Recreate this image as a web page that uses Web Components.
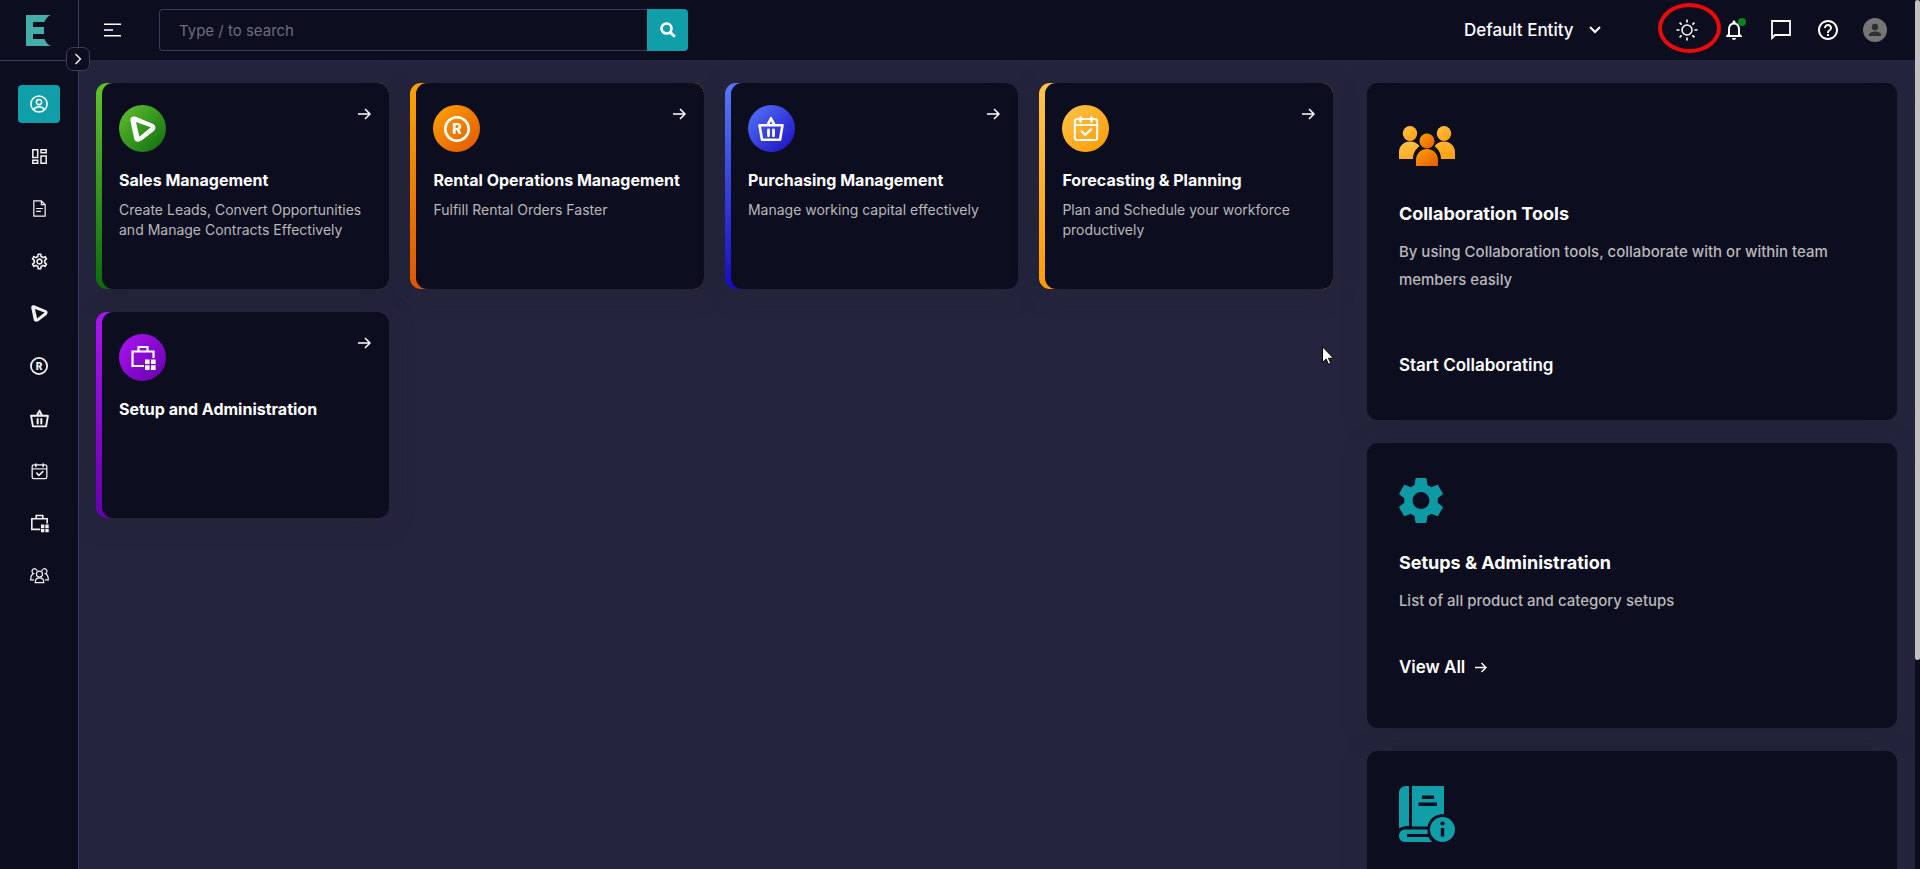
<!DOCTYPE html>
<html lang="en">
<head>
<meta charset="utf-8">
<title>Dashboard</title>
<style>
  html, body { margin: 0; height: 100%; background: #24243e; }
  body {
    --surface: #0d0d20;
    --canvas: #24243e;
    --line: #3c3b5a;
    --accent: #109fa9;
    --muted: #b9b9b9;
    --shadow: 0 4px 24px rgba(34, 36, 40, .35);
    font-family: Inter, sans-serif;
    color: #fff;
  }
</style>
</head>
<body>
<app-shell>
  <app-sidebar slot="sidebar"></app-sidebar>
  <app-header slot="header"></app-header>

  <module-card slot="modules" icon="sales" heading="Sales Management" style="--from:#62c22e;--to:#0b6b0f">Create Leads, Convert Opportunities and Manage Contracts Effectively</module-card>
  <module-card slot="modules" icon="registered" heading="Rental Operations Management" style="--from:#ffa400;--to:#e05500">Fulfill Rental Orders Faster</module-card>
  <module-card slot="modules" icon="basket" heading="Purchasing Management" style="--from:#5577fa;--to:#1a0bc0">Manage working capital effectively</module-card>
  <module-card slot="modules" icon="calendar" heading="Forecasting &amp; Planning" style="--from:#fcc449;--to:#ff9a06">Plan and Schedule your workforce productively</module-card>
  <module-card slot="modules" icon="briefcase" heading="Setup and Administration" style="--from:#ae14f5;--to:#6300ab"></module-card>

  <info-card slot="aside" icon="people" heading="Collaboration Tools" action="Start Collaborating" style="--icon-h:56px;--pad-top:35px;--action-gap:53px;--pad-bottom:37px">By using Collaboration tools, collaborate with or within team members easily</info-card>
  <info-card slot="aside" icon="gear" heading="Setups &amp; Administration" action="View All" arrow style="--icon-h:45px;--pad-top:35px;--action-gap:34px;--pad-bottom:43px">List of all product and category setups</info-card>
  <info-card slot="aside" icon="book" style="--icon-h:56px;--pad-top:35px;--pad-bottom:160px"></info-card>
</app-shell>

<script>
const S = 'fill="none" stroke="currentColor"';
const ICONS = {
  logo: ['0 0 25 31', '<path fill="#44ada8" d="M0 0h25c-3 1-5.500 4-6.500 7H7v5h11v7H7v5h11.500c1 3 3.500 6 6.500 7H0z"/>'],
  menu: ['0 0 17 14', `<path ${S} stroke-width="1.600" d="M0 1.200h17M0 7h9M0 12.800h17"/>`],
  chevronRight: ['0 0 8 12', `<path ${S} stroke-width="1.300" d="M1.500 1l5 5-5 5"/>`],
  chevronDown: ['0 0 12 8', `<path ${S} stroke-width="2" d="M1 1l5 5 5-5"/>`],
  search: ['0 0 16 16', `<circle cx="6.500" cy="6.500" r="5" ${S} stroke-width="2.600"/><path ${S} stroke-width="2.800" d="M10.200 10.200l4.600 4.600"/>`],
  arrow: ['0 0 13 12', `<path ${S} stroke-width="1.500" d="M0 6h12M7 1l5 5-5 5"/>`],
  sun: ['0 0 22 22', `<circle cx="11" cy="11" r="5" ${S} stroke-width="1.500"/><path ${S} stroke-width="1.600" d="M11 .5v3M11 18.500v3M.5 11h3M18.500 11h3M3.600 3.600l2 2M16.400 16.400l2 2M3.600 18.400l2-2M16.400 5.600l2-2"/>`],
  bell: ['4 2 16 20', '<path fill="currentColor" d="M12 22c1.100 0 2-.9 2-2h-4c0 1.100.9 2 2 2zm6-6v-5c0-3.070-1.630-5.640-4.500-6.320V4c0-.83-.67-1.500-1.500-1.500s-1.500.67-1.500 1.500v.68C7.640 5.360 6 7.920 6 11v5l-2 2v1h16v-1l-2-2zm-2 1H8v-6c0-2.480 1.510-4.500 4-4.500s4 2.020 4 4.500v6z"/>'],
  chat: ['0 0 20 20', `<path ${S} stroke-width="1.800" d="M1 18V1h18v14H4z"/>`],
  help: ['2 2 20 20', '<path fill="currentColor" d="M11 18h2v-2h-2v2zm1-16C6.480 2 2 6.480 2 12s4.480 10 10 10 10-4.480 10-10S17.520 2 12 2zm0 18c-4.410 0-8-3.590-8-8s3.590-8 8-8 8 3.590 8 8-3.590 8-8 8zm0-14c-2.210 0-4 1.790-4 4h2c0-1.100.9-2 2-2s2 .9 2 2c0 2-3 1.750-3 5h2c0-2.250 3-2.500 3-5 0-2.210-1.790-4-4-4z"/>'],
  avatar: ['0 0 24 24', '<circle cx="12" cy="12" r="12" fill="#757575"/><circle cx="12" cy="9" r="3.200" fill="#303030"/><path fill="#303030" d="M6 18v-1.200c0-2 4-3.200 6-3.200s6 1.200 6 3.200V18z"/>'],
  user: ['0 0 20 20', `<circle cx="10" cy="10" r="9" ${S} stroke-width="1.700"/><circle cx="10" cy="7.800" r="2.900" ${S} stroke-width="1.700"/><path ${S} stroke-width="1.700" d="M3.800 16.200c1.700-2.200 3.800-3.200 6.200-3.200s4.500 1 6.200 3.200"/>`],
  dashboard: ['0 0 15 15', `<path ${S} stroke-width="1.500" d="M.8.8h4.900v7.700H.8zM.8 11.200h4.900v3H.8zM9 .8h5.200v3H9zM9 7h5.200v7.200H9z"/>`],
  document: ['0 0 14 18', `<path ${S} stroke-width="1.300" d="M1 1h8l4 4v12H1zM9 1v4h4M3.500 9h7M3.500 12h5"/>`],
  settings: ['1.500 1.500 21 21', '<path fill="currentColor" d="M19.430 12.980c.04-.32.07-.64.07-.98 0-.34-.03-.66-.07-.98l2.110-1.650c.19-.15.24-.42.12-.64l-2-3.460c-.09-.16-.26-.25-.44-.25-.06 0-.12.010-.17.030l-2.490 1c-.52-.4-1.080-.73-1.690-.98l-.38-2.650C14.460 2.180 14.250 2 14 2h-4c-.25 0-.46.18-.49.42l-.38 2.650c-.61.25-1.170.59-1.690.98l-2.490-1c-.06-.02-.12-.03-.18-.03-.17 0-.34.09-.43.25l-2 3.460c-.13.22-.07.49.12.64l2.110 1.650c-.04.32-.07.65-.07.98 0 .33.03.66.07.98l-2.110 1.650c-.19.15-.24.42-.12.64l2 3.460c.09.16.26.25.44.25.06 0 .12-.01.17-.03l2.490-1c.52.4 1.080.73 1.690.98l.38 2.650c.03.24.24.42.49.42h4c.25 0 .46-.18.49-.42l.38-2.650c.61-.25 1.170-.59 1.690-.98l2.490 1c.06.02.12.03.18.03.17 0 .34-.09.43-.25l2-3.460c.12-.22.07-.49-.12-.64l-2.110-1.650zm-1.980-1.710c.04.31.05.52.05.73 0 .21-.02.43-.05.73l-.14 1.130.89.7 1.080.84-.7 1.210-1.270-.51-1.040-.42-.9.68c-.43.32-.84.56-1.250.73l-1.060.43-.16 1.130-.2 1.350h-1.400l-.19-1.350-.16-1.130-1.060-.43c-.43-.18-.83-.41-1.230-.71l-.91-.7-1.060.43-1.270.51-.7-1.210 1.080-.84.89-.7-.14-1.130c-.03-.31-.05-.54-.05-.74s.02-.43.05-.73l.14-1.130-.89-.7-1.080-.84.7-1.210 1.270.51 1.040.42.9-.68c.43-.32.84-.56 1.250-.73l1.060-.43.16-1.130.2-1.350h1.390l.19 1.350.16 1.130 1.060.43c.43.18.83.41 1.230.71l.91.7 1.060-.43 1.270-.51.7 1.210-1.070.85-.89.7.14 1.130zM12 8c-2.210 0-4 1.790-4 4s1.790 4 4 4 4-1.790 4-4-1.790-4-4-4zm0 6c-1.100 0-2-.9-2-2s.9-2 2-2 2 .9 2 2-.9 2-2 2z"/>'],
  sales: ['0 0 27 27', '<path fill="currentColor" fill-rule="evenodd" d="M.4 4.500C0 1 3 0 6 .8L24 8.300c3 1.500 3 5 1 7L12 25.500c-3 2-7 1.500-7.700-2zM6.200 6.200l3.600 15.400 11.800-9.800z"/>'],
  registered: ['0 0 26 26', `<circle cx="13" cy="13" r="11.700" ${S} stroke-width="2.600"/><text x="13" y="18.200" text-anchor="middle" font-family="Inter, sans-serif" font-size="14.500" font-weight="800" fill="currentColor">R</text>`],
  basket: ['0 0 26 26', `<path ${S} stroke-width="2.600" stroke-linejoin="round" d="M1.500 9.300h23L22 23.800H4z"/><path fill="currentColor" fill-rule="evenodd" d="M8 9l4-7.500c.6-1 1.400-1 2 0L18 9zM13 5.200L11.600 8h2.800z"/><path ${S} stroke-width="2.800" stroke-linecap="round" d="M10.500 13.800v6M15.500 13.800v6"/>`],
  calendar: ['0 0 26 26', `<rect x="1.800" y="3" width="22.400" height="21" rx="2.500" ${S} stroke-width="2"/><path ${S} stroke-width="1.800" d="M2 9h22"/><path ${S} stroke-width="2.400" stroke-linecap="round" d="M7.500 1.500v4M18.500 1.500v4M8.800 15.500l3.300 3.300 6-5.500"/>`],
  briefcase: ['0 0 26 26', `<path ${S} stroke-width="2.200" d="M14 21H2.500V6.500h21v6.500M8.500 6V2h9v4"/><path fill="currentColor" d="M15 14.500h4.600v4.600H15zM21 14.500h4.600v4.600H21zM15 20.300h4.600v4.600H15zM21 20.300h4.600v4.600H21z"/>`],
  team: ['0 0 20 18', `<g ${S} stroke-width="1.300"><circle cx="10" cy="7.500" r="3.200"/><path d="M5.500 16.500c0-3.500 1.800-5 4.500-5s4.500 1.500 4.500 5zM7.500 4.200A2.700 2.700 0 1 0 3.600 7C1.700 7.800.8 9.500.7 13.500h3.500M12.500 4.200A2.700 2.700 0 1 1 16.400 7c1.900.8 2.800 2.500 2.900 6.500h-3.500"/></g>`],
  people: ['0 0 56 40', '<defs><linearGradient id="a" x1="0" y1="0" x2="1" y2="1"><stop offset="0" stop-color="#ffc34a"/><stop offset="1" stop-color="#ff9d0c"/></linearGradient><linearGradient id="b" x1="0" y1="0" x2="1" y2="1"><stop offset="0" stop-color="#ffa200"/><stop offset="1" stop-color="#e45b00"/></linearGradient></defs><g fill="url(#a)"><ellipse cx="11" cy="7.500" rx="7.200" ry="7.500"/><ellipse cx="45" cy="7.500" rx="7.200" ry="7.500"/><path d="M0 33v-7c0-6 5-10.500 11-10.500 4 0 7.500 1.800 9.500 4.800C16 23.500 14 28 14 33zM56 33v-7c0-6-5-10.500-11-10.500-4 0-7.500 1.800-9.500 4.800C40 23.500 42 28 42 33z"/></g><g fill="url(#b)"><ellipse cx="28" cy="15" rx="7.500" ry="7.500"/><path d="M17 40v-6c0-6.500 5-11 11-11s11 4.500 11 11v6z"/></g>'],
  gear: ['2.600 2.400 18.800 19.200', '<path fill="#0e9aa5" d="M19.140 12.940c.04-.3.06-.61.06-.94 0-.32-.02-.64-.07-.94l2.030-1.580c.18-.14.23-.41.12-.61l-1.920-3.320c-.12-.22-.37-.29-.59-.22l-2.390.96c-.5-.38-1.030-.7-1.620-.94l-.36-2.540c-.04-.24-.24-.41-.48-.41h-3.840c-.24 0-.43.17-.47.41l-.36 2.540c-.59.24-1.130.57-1.620.94l-2.390-.96c-.22-.08-.47 0-.59.22L2.740 8.870c-.12.21-.08.47.12.61l2.030 1.580c-.05.3-.09.63-.09.94s.02.64.07.94l-2.030 1.580c-.18.14-.23.41-.12.61l1.920 3.320c.12.22.37.29.59.22l2.390-.96c.5.38 1.030.7 1.620.94l.36 2.540c.05.24.24.41.48.41h3.840c.24 0 .44-.17.47-.41l.36-2.540c.59-.24 1.130-.56 1.620-.94l2.390.96c.22.08.47 0 .59-.22l1.920-3.320c.12-.22.07-.47-.12-.61l-2.010-1.580zM12 15.600c-1.980 0-3.600-1.620-3.600-3.600s1.620-3.600 3.600-3.600 3.600 1.620 3.600 3.600-1.620 3.600-3.600 3.600z"/>'],
  book: ['0 0 56 56', '<g fill="#109fa9"><path d="M10 0v40c-4 0-7 .5-10 2.500V7c0-4 3-7 7-7zM13 0h32v28c-9 0-15 5-16.500 12.500H13z"/><path d="M6 43.500h22.500c0 1.800 0 3 .3 4.500H8v3h21.500c1 2 2.300 3.700 4 5H6c-8 0-8-12.500 0-12.500z"/><circle cx="43.500" cy="43.500" r="12.500"/></g><g fill="#0d0d20"><path d="M23 9.500h12v3.500H23zM19.500 16.500h18.500V20H19.500zM41.800 42h3.400v8.500h-3.400z"/><circle cx="43.500" cy="37.500" r="2.100"/></g>'],
  pointer: ['0 0 12 19', '<path fill="#fff" stroke="#000" d="M.5.8v15.700l3.600-3.400 2.400 5.200 2.300-1-2.300-5.100h5z"/>']
};

class Base extends HTMLElement {
  constructor() { super(); this.attachShadow({ mode: 'open' }); }
  connectedCallback() { this.shadowRoot.innerHTML = this.render(); }
}

customElements.define('app-icon', class extends Base {
  render() {
    const [box, art] = ICONS[this.getAttribute('name')];
    return `<style>
      :host { display: inline-flex; flex: none; }
      svg { display: block; width: 100%; height: 100%; }
    </style><svg viewBox="${box}" preserveAspectRatio="xMidYMid meet" aria-hidden="true">${art}</svg>`;
  }
});

customElements.define('app-shell', class extends Base {
  render() {
    return `<style>
      :host { display: grid; grid-template-columns: auto 1fr 5px; height: 100vh; overflow: hidden; position: relative; }
      .main { display: flex; flex-direction: column; min-width: 0; min-height: 0; }
      .content {
        flex: 1; min-height: 0; overflow: hidden; background: var(--canvas);
        display: grid; grid-template-columns: 7fr 3fr; gap: 34px; align-items: start;
        padding: 23px 18px 0 17px; box-sizing: border-box;
      }
      .modules { display: grid; grid-template-columns: repeat(4, 1fr); gap: 23px 21px; }
      .aside { display: flex; flex-direction: column; gap: 23px; }
      .track { background: var(--surface); }
      .thumb { height: 76%; background: #c1c1c1; border-radius: 3px; }
      .pointer { position: absolute; left: 1322px; top: 346px; width: 12px; height: 19px; }
    </style>
    <slot name="sidebar"></slot>
    <div class="main">
      <slot name="header"></slot>
      <main class="content">
        <div class="modules"><slot name="modules"></slot></div>
        <aside class="aside"><slot name="aside"></slot></aside>
      </main>
    </div>
    <div class="track"><div class="thumb"></div></div>
    <app-icon class="pointer" name="pointer"></app-icon>`;
  }
});

customElements.define('app-sidebar', class extends Base {
  render() {
    const items = [['user', 'Home', 18], ['dashboard', 'Dashboard', 15], ['document', 'Documents', 17], ['settings', 'Settings', 17], ['sales', 'Sales', 17], ['registered', 'Rental', 18], ['basket', 'Purchasing', 19], ['calendar', 'Planning', 17], ['briefcase', 'Administration', 19], ['team', 'Collaboration', 19]];
    return `<style>
      :host { display: block; width: 78px; background: var(--surface); border-right: 1px solid var(--line); position: relative; z-index: 1; }
      .brand { display: flex; align-items: center; justify-content: center; height: 60px; padding-right: 1px; border-bottom: 1px solid var(--line); box-sizing: content-box; }
      .brand app-icon { width: 25px; height: 31px; }
      .toggle {
        position: absolute; right: -12px; top: 47px; width: 24px; height: 24px; padding: 0;
        display: flex; align-items: center; justify-content: center;
        background: var(--surface); border: 1px solid var(--line); border-radius: 7px; color: #fff;
      }
      .toggle app-icon { width: 8px; height: 12px; }
      nav { display: flex; flex-direction: column; justify-content: space-between; align-items: center; height: 510px; padding-top: 24px; }
      a { display: flex; align-items: center; justify-content: center; width: 42px; height: 38px; border-radius: 4px; color: #f0f0f3; }
      a.active { background: var(--accent); color: #fff; }
    </style>
    <a class="brand" href="#" style="width:auto;border-radius:0;height:60px" aria-label="Start page"><app-icon name="logo"></app-icon></a>
    <button class="toggle" aria-label="Expand menu"><app-icon name="chevronRight"></app-icon></button>
    <nav>${items.map(([n, l, s], i) => `<a href="#" aria-label="${l}"${i ? '' : ' class="active"'}><app-icon name="${n}" style="width:${s}px;height:${s}px"></app-icon></a>`).join('')}</nav>`;
  }
});

customElements.define('app-header', class extends Base {
  render() {
    return `<style>
      :host { display: flex; align-items: center; height: 60px; flex: none; padding: 0 17px 0 16px; background: var(--surface); }
      button { display: flex; align-items: center; justify-content: center; padding: 0; border: 0; background: none; color: #fff; font: inherit; }
      .menu { width: 35px; height: 35px; margin-right: 29px; }
      .menu app-icon { width: 17px; height: 14px; }
      form { display: flex; flex: 0 1 529px; height: 42px; min-width: 0; }
      input {
        flex: 1; min-width: 0; box-sizing: border-box; padding: 0 19px; outline: 0;
        background: transparent; border: 1px solid var(--line); border-right: 0; border-radius: 4px 0 0 4px;
        color: #fff; font: 400 15px Inter, sans-serif;
      }
      input::placeholder { color: #6c6c7a; opacity: 1; }
      .go { width: 41px; background: var(--accent); border-radius: 0 4px 4px 0; }
      .go app-icon { width: 16px; height: 16px; }
      .entity { display: grid; align-items: center; margin-left: auto; margin-right: 62px; }
      .entity > * { grid-area: 1 / 1; }
      select {
        appearance: none; margin: 0; padding: 0 27px 0 0; border: 0; background: transparent;
        color: #fff; font: 500 17px/24px Inter, sans-serif;
      }
      .entity app-icon { justify-self: end; width: 12px; height: 8px; pointer-events: none; }
      .tools { display: flex; }
      .tools button { position: relative; width: 47px; height: 42px; }
      .tools app-icon { width: 20px; height: 20px; }
      .tools .big { width: 22px; height: 22px; }
      .tools .round { width: 24px; height: 24px; }
      .ring { position: absolute; left: -5px; top: -6px; width: 55px; height: 42px; border: 4px solid #ea0a0a; border-radius: 50%; }
      .dot { position: absolute; left: 28px; top: 9px; width: 8px; height: 8px; border-radius: 50%; background: #0a8220; }
    </style>
    <button class="menu" aria-label="Menu"><app-icon name="menu"></app-icon></button>
    <form onsubmit="return false">
      <input type="text" placeholder="Type / to search" aria-label="Search">
      <button class="go" aria-label="Search"><app-icon name="search"></app-icon></button>
    </form>
    <div class="entity">
      <select aria-label="Entity"><option>Default Entity</option></select>
      <app-icon name="chevronDown"></app-icon>
    </div>
    <div class="tools">
      <button aria-label="Light theme"><app-icon class="big" name="sun"></app-icon><span class="ring"></span></button>
      <button aria-label="Notifications"><app-icon name="bell"></app-icon><span class="dot"></span></button>
      <button aria-label="Messages"><app-icon name="chat"></app-icon></button>
      <button aria-label="Help"><app-icon name="help"></app-icon></button>
      <button aria-label="Account"><app-icon class="round" name="avatar"></app-icon></button>
    </div>`;
  }
});

customElements.define('module-card', class extends Base {
  render() {
    return `<style>
      :host { display: flex; min-height: 206px; padding-left: 6px; box-sizing: border-box; border-radius: 11px; background: linear-gradient(var(--from), var(--to)); box-shadow: var(--shadow); }
      article { flex: 1; min-width: 0; box-sizing: border-box; padding: 22px 18px 22px 17px; border-radius: 11px; background: var(--surface); }
      .top { display: flex; justify-content: space-between; align-items: flex-start; }
      .badge { display: flex; align-items: center; justify-content: center; width: 47px; height: 47px; border-radius: 50%; background: linear-gradient(135deg, var(--from), var(--to)); }
      .badge app-icon { width: 26px; height: 26px; }
      a { display: flex; color: #fff; padding-top: 3px; }
      a app-icon { width: 13px; height: 12px; }
      h2 { margin: 16px 0 8px; font-size: 16px; line-height: 24px; font-weight: 700; white-space: nowrap; }
      p { margin: 0; font-size: 14px; line-height: 20px; color: var(--muted); }
    </style>
    <article>
      <div class="top">
        <span class="badge"><app-icon name="${this.getAttribute('icon')}"></app-icon></span>
        <a href="#" aria-label="Open"><app-icon name="arrow"></app-icon></a>
      </div>
      <h2>${this.getAttribute('heading').replace('&', '&amp;')}</h2>
      <p><slot></slot></p>
    </article>`;
  }
});

customElements.define('info-card', class extends Base {
  render() {
    const heading = this.getAttribute('heading');
    const body = heading ? `
      <h2>${heading.replace('&', '&amp;')}</h2>
      <p><slot></slot></p>
      <a href="#">${this.getAttribute('action')}${this.hasAttribute('arrow') ? '<app-icon name="arrow"></app-icon>' : ''}</a>` : '';
    return `<style>
      :host { display: block; box-sizing: border-box; padding: var(--pad-top) 32px var(--pad-bottom); border-radius: 11px; background: var(--surface); box-shadow: var(--shadow); }
      .art { display: flex; align-items: center; height: var(--icon-h); }
      .people { width: 56px; height: 40px; }
      .gear { width: 44px; height: 45px; }
      .book { width: 56px; height: 56px; }
      h2 { margin: 28px 0 12px; font-size: 18px; line-height: 24px; font-weight: 700; }
      p { margin: 0; font-size: 15px; line-height: 28px; font-weight: 500; color: var(--muted); }
      a { display: flex; align-items: center; gap: 10px; margin-top: var(--action-gap); font-size: 17px; line-height: 36px; font-weight: 600; color: #fff; text-decoration: none; }
      a app-icon { width: 12px; height: 11px; }
    </style>
    <div class="art"><app-icon class="${this.getAttribute('icon')}" name="${this.getAttribute('icon')}"></app-icon></div>${body}`;
  }
});
</script>
</body>
</html>
